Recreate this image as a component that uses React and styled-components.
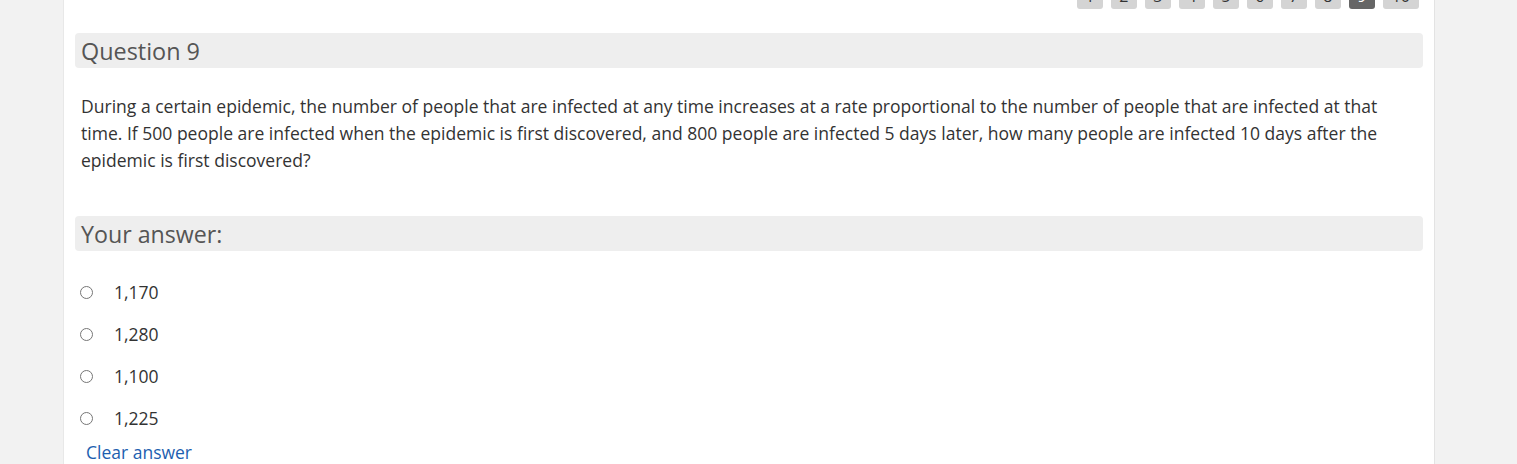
import React from "react";
import styled, { createGlobalStyle } from "styled-components";

const Global = createGlobalStyle`
  html, body { margin: 0; padding: 0; background: #f2f2f2; }
  body { font-family: "Open Sans", "Liberation Sans", sans-serif; color: #333; }
`;

const Page = styled.div`
  height: 464px;
  overflow: hidden;
`;

const Panel = styled.main`
  margin-left: 63px;
  width: 1372px;
  min-height: 464px;
  background: #fff;
  border-left: 1px solid #e8e8e8;
  border-right: 1px solid #e3e3e3;
  padding: 0 11px;
  box-sizing: border-box;
`;

const Pager = styled.nav`
  display: flex;
  justify-content: flex-end;
  gap: 8px;
  margin-top: -17px;
  padding-right: 4px;
`;

const PageBtn = styled.span`
  display: flex;
  align-items: center;
  justify-content: center;
  min-width: 26px;
  padding: 0 ${(p) => (p.$wide ? 9 : 5)}px;
  box-sizing: border-box;
  height: 26px;
  border-radius: 3px;
  font-size: 16px;
  background: ${(p) => (p.$active ? "#666" : "#d4d4d4")};
  color: ${(p) => (p.$active ? "#fff" : "#333")};
`;

const Header = styled.h2`
  margin: ${(p) => p.$top}px 0 0;
  height: 35px;
  display: flex;
  align-items: center;
  padding-left: 6px;
  background: #eee;
  border-radius: 4px;
  font-weight: 400;
  font-size: ${(p) => p.$size}px;
  color: #555;
`;

const Prompt = styled.p`
  margin: 25px 0 0;
  padding: 0 30px 0 6px;
  font-size: 17.55px;
  line-height: 27px;
  color: #333;
`;

const Options = styled.div`
  margin-top: 20px;
  display: flex;
  flex-direction: column;
`;

const Option = styled.label`
  display: flex;
  align-items: center;
  height: 42px;
  padding-left: 5px;
  font-size: 17.5px;
  color: #333;
`;

const Radio = styled.span`
  width: 11px;
  height: 11px;
  border: 1px solid #767676;
  border-radius: 50%;
  margin-right: 21px;
  flex: none;
`;

const ClearLink = styled.a`
  display: block;
  padding-left: 11px;
  font-size: 17.5px;
  line-height: 26px;
  color: #1d5fb0;
  text-decoration: none;
`;

const pages = [1, 2, 3, 4, 5, 6, 7, 8, 9, 10];
const answers = ["1,170", "1,280", "1,100", "1,225"];

export default function App() {
  return (
    <Page>
      <Global />
      <Panel>
        <Pager>
          {pages.map((n) => (
            <PageBtn key={n} $active={n === 9} $wide={n >= 10}>{n}</PageBtn>
          ))}
        </Pager>
        <Header $top={24} $size={23.4}>Question 9</Header>
        <Prompt>
          During a certain epidemic, the number of people that are infected at any time increases at a rate proportional to the number of people that are infected at that time. If 500 people are infected when the epidemic is first discovered, and 800 people are infected 5 days later, how many people are infected 10 days after the epidemic is first discovered?
        </Prompt>
        <Header $top={42} $size={23.2}>Your answer:</Header>
        <Options>
          {answers.map((a) => (
            <Option key={a}>
              <Radio />
              {a}
            </Option>
          ))}
        </Options>
        <ClearLink href="#">Clear answer</ClearLink>
      </Panel>
    </Page>
  );
}
